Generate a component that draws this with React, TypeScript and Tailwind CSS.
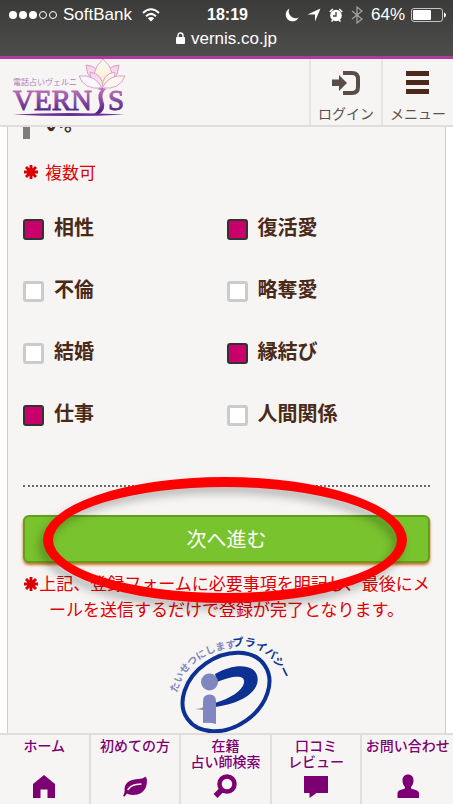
import type { ReactNode } from 'react';

type Option = { id: string; label: string; checked: boolean };

const options: Option[] = [
  { id: 'aisho', label: '相性', checked: true },
  { id: 'fukkatsu', label: '復活愛', checked: true },
  { id: 'furin', label: '不倫', checked: false },
  { id: 'ryakudatsu', label: '略奪愛', checked: false },
  { id: 'kekkon', label: '結婚', checked: false },
  { id: 'enmusubi', label: '縁結び', checked: true },
  { id: 'shigoto', label: '仕事', checked: true },
  { id: 'ningen', label: '人間関係', checked: false },
];

const navItems: { lines: string[]; icon: ReactNode }[] = [
  {
    lines: ['ホーム'],
    icon: <path d="M12 1 L23 10 V24 H15.500 V15.500 H8.500 V24 H1 V10 Z" />,
  },
  {
    lines: ['初めての方'],
    icon: (
      <>
        <path d="M0 22 C1 20 2 18 1.500 15 C2 7 9 5.500 15 5 C19 5 21 4 22.500 2.500 C24.500 5 24 8 23.500 11 C22 18 16 21 10 21 C7 21 5 20 4 19.500 L1.500 22.500 Z" />
        <path d="M5 15.500 C8 11 12 10.500 18 10" fill="none" stroke="#f6f5f4" strokeWidth="1.500" strokeLinecap="round" />
      </>
    ),
  },
  {
    lines: ['在籍', '占い師検索'],
    icon: (
      <g fill="none" stroke="currentColor">
        <circle cx="14" cy="10" r="7.500" strokeWidth="4.500" />
        <path d="M9 15.500 L2.500 22" strokeWidth="5.500" />
      </g>
    ),
  },
  {
    lines: ['口コミ', 'レビュー'],
    icon: <path d="M0 2 H24 V19 H12.500 L5.500 24 V19 H0 Z" />,
  },
  {
    lines: ['お問い合わせ'],
    icon: (
      <path d="M12 0.500 C15.500 0.500 17.500 3 17.500 6.500 C17.500 9.500 16.500 11.500 15 13 V14.500 L21 16.500 Q23 17.500 23 19 V24 H1.500 V19 Q1.500 17.500 3 16.500 L9 14.500 V13 C7.500 11.500 6.500 9.500 6.500 6.500 C6.500 3 8.500 0.500 12 0.500 Z" />
    ),
  },
];

function StatusBar() {
  return (
    <div className="border-b-[3px] border-[#b03a9e] bg-linear-to-b from-[#3b3b3a] to-[#4d4d4b] font-['Liberation_Sans',sans-serif] text-white">
      <div className="grid h-7 grid-cols-[1fr_auto_1fr] items-center pl-[9px] pr-[7px] pt-0.5 text-[17px]">
        <div className="flex items-center">
          <svg className="mr-1.5 h-2.5 w-12" viewBox="0 0 48 10" fill="currentColor">
            <circle cx="4" cy="5" r="4" />
            <circle cx="14" cy="5" r="4" />
            <circle cx="24" cy="5" r="4" />
            <circle cx="34" cy="5" r="3.500" fill="none" stroke="currentColor" />
            <circle cx="44" cy="5" r="3.500" fill="none" stroke="currentColor" />
          </svg>
          <span>SoftBank</span>
          <svg className="ml-2.5 h-3.5 w-[18px]" viewBox="0 0 18 14" fill="none" stroke="currentColor" strokeWidth="2">
            <path d="M1 5 Q9 -2.500 17 5" />
            <path d="M4 8.200 Q9 3.500 14 8.200" />
            <path d="M9 13.500 L5.800 10.300 Q9 7.800 12.200 10.300 Z" fill="currentColor" stroke="none" />
          </svg>
        </div>
        <span className="text-base font-bold">18:19</span>
        <div className="flex items-center justify-end">
          <svg className="mr-2 h-3.5 w-3.5" viewBox="0 0 14 14" fill="currentColor">
            <path d="M4.500 0.500 A6.800 6.800 0 1 0 13.700 9.500 A6.800 6.800 0 0 1 4.500 0.500 Z" />
          </svg>
          <svg className="mr-2 h-3.5 w-3.5" viewBox="0 0 14 14" fill="currentColor">
            <path d="M13.500 0.500 L8 13.500 V6.500 H0.500 Z" />
          </svg>
          <svg className="mr-2 h-3.5 w-3.5" viewBox="0 0 14 14">
            <circle cx="7" cy="7.500" r="5.800" fill="currentColor" />
            <path d="M0.800 4 L3.800 1 M13.200 4 L10.200 1 M2.500 13.500 L4 12 M11.500 13.500 L10 12" stroke="currentColor" strokeWidth="1.600" />
            <path d="M7 4 V8 H4" fill="none" stroke="#414140" strokeWidth="1.300" />
          </svg>
          <svg className="mr-2 h-[18px] w-3 text-[#a0a09f]" viewBox="0 0 12 18" fill="none" stroke="currentColor" strokeWidth="1.300">
            <path d="M1 5 L11 13 L6 17 V1 L11 5 L1 13" />
          </svg>
          <span>64%</span>
          <svg className="ml-1.5 h-3.5 w-[35px]" viewBox="0 0 35 14">
            <rect x="0.500" y="0.500" width="31" height="13" rx="2.500" fill="none" stroke="#c4c4c4" />
            <rect x="2" y="2" width="18" height="10" rx="1" fill="currentColor" />
            <path d="M33 4.500 Q35 5 35 7 Q35 9 33 9.500 Z" fill="currentColor" />
          </svg>
        </div>
      </div>
      <div className="flex h-7 items-start justify-center gap-1.5 text-[17px] leading-[22px]">
        <svg className="mt-1 h-3 w-[9px]" viewBox="0 0 9 12" fill="currentColor">
          <rect y="5" width="9" height="7" rx="1" />
          <path d="M2 6 V3.500 Q2 1 4.500 1 Q7 1 7 3.500 V6" fill="none" stroke="currentColor" strokeWidth="1.400" />
        </svg>
        <span>vernis.co.jp</span>
      </div>
    </div>
  );
}

function Logo() {
  return (
    <svg className="h-[60px] w-[116px]" viewBox="0 0 116 60" role="img" aria-label="電話占いヴェルニ VERNIS">
      <defs>
        <linearGradient id="letters" x1="0" y1="30" x2="0" y2="52" gradientUnits="userSpaceOnUse">
          <stop offset="0" stopColor="#bd74b8" />
          <stop offset="1" stopColor="#56258c" />
        </linearGradient>
        <linearGradient id="petalPink" x1="0" y1="0" x2="0" y2="1">
          <stop offset="0" stopColor="#f5cfe6" />
          <stop offset="1" stopColor="#fdf3ec" />
        </linearGradient>
        <linearGradient id="petalCream" x1="0" y1="0" x2="0" y2="1">
          <stop offset="0" stopColor="#fdfbf5" />
          <stop offset="1" stopColor="#fbe9c8" />
        </linearGradient>
      </defs>
      <g stroke="#d49aca" strokeWidth="0.900">
        <path d="M74 6 Q88 6 93 27 Q75 24 74 6 Z" fill="url(#petalPink)" />
        <path d="M107 6 Q94 6 88 27 Q106 24 107 6 Z" fill="url(#petalPink)" />
        <path d="M91 0 Q107 14 95 28 H86 Q76 14 91 0 Z" fill="url(#petalCream)" />
        <path d="M78 13 Q91 15 91 29 Q78 28 78 13 Z" fill="url(#petalPink)" />
        <path d="M103 13 Q90 15 90 29 Q103 28 103 13 Z" fill="url(#petalCream)" />
        <path d="M67 17 Q83 15 90 29 Q72 31 67 17 Z" fill="#fdf6fa" />
        <path d="M113 17 Q97 15 90 29 Q108 31 113 17 Z" fill="#fdf6ee" />
      </g>
      <text x="1" y="26" fontSize="8" fill="#ad7db5" className="font-['Noto_Sans_CJK_JP',sans-serif]">
        電話占いヴェルニ
      </text>
      <g fill="url(#letters)" stroke="url(#letters)" strokeWidth="0.900" fontSize="29" className="font-['Liberation_Serif',serif]">
        <text x="1" y="51">VERN</text>
        <text x="96" y="51">S</text>
      </g>
      <path d="M85 30 Q90 28 94 30 Q89 34 91 41 Q95 51 86 56 L82 55 Q90 50 87 42 Q85 35 89 31 Z" fill="url(#letters)" />
      <path d="M1 55.500 Q58 52.500 113 55.500 Q58 58.500 1 55.500 Z" fill="#6a2f95" />
    </svg>
  );
}

function Asterisk() {
  return (
    <svg className="inline-block h-4 w-4 align-[-2px]" viewBox="0 0 16 16" stroke="#d80000" strokeWidth="2.900">
      <path d="M8 1 V15 M1 8 H15 M3 3 L13 13 M13 3 L3 13" />
    </svg>
  );
}

function PrivacyMark() {
  return (
    <svg className="mx-auto -mt-0.5 block h-[120px] w-[150px]" viewBox="0 0 150 120" role="img" aria-label="プライバシーマーク">
      <defs>
        <path id="arcLeft" d="M25 73 C30 50 50 30 84 28" />
        <path id="arcRight" d="M81 27 C104 22 124 34 136 70" />
      </defs>
      <g className="font-['Noto_Sans_CJK_JP',sans-serif] font-bold">
        <text fontSize="10" fill="#8087c0">
          <textPath href="#arcLeft">たいせつにします</textPath>
        </text>
        <text fontSize="11" fill="#0c3192">
          <textPath href="#arcRight">プライバシー</textPath>
        </text>
      </g>
      <ellipse cx="74" cy="72" rx="47" ry="35" transform="rotate(-35 74 72)" fill="none" stroke="#0c3192" strokeWidth="4" />
      <path
        d="M63 54 C75 47 87 45 95 47 C105 49 107 58 105 64 C101 76 84 84 63 87 V83 C79 78 90 71 92 63 C93 57 88 56 81 57 C75 58 70 60 65 62 Z"
        fill="#0c3192"
      />
      <circle cx="57.500" cy="62" r="8.500" fill="#8087c0" />
      <path d="M51 103 V81 Q51 74.500 57.500 74.500 Q64 74.500 64 81 V104 Q57 102 51 103 Z" fill="#8087c0" />
      <path d="M43 89 Q48 89 52 87 V90 Z" fill="#8087c0" />
    </svg>
  );
}

export default function App() {
  return (
    <div className="flex h-screen flex-col bg-white font-['Noto_Sans_CJK_JP',sans-serif] text-[#4a2a17]">
      <StatusBar />

      {/* Site header */}
      <header className="flex h-[68px] shrink-0 border-b-2 border-[#dfdedc] bg-[#f6f5f4]">
        <a href="#top" className="flex-1 pl-3">
          <Logo />
        </a>
        <a href="#login" className="flex w-[72px] flex-col items-center border-l-2 border-[#e6e5e4] pt-2.5 text-sm leading-5 text-[#5c514c]">
          <svg className="mb-1.5 h-7 w-7" viewBox="0 0 28 28">
            <path d="M0 10.500 H7 V6 L15 14 L7 22 V17 H0 Z" fill="#5a4d48" />
            <path d="M11 4 H20 Q26 4 26 10 V18 Q26 24 20 24 H11" fill="none" stroke="#5a4d48" strokeWidth="4" />
          </svg>
          ログイン
        </a>
        <button className="flex w-[72px] flex-col items-center border-l-2 border-[#e6e5e4] pt-2.5 text-sm leading-5 text-[#5c514c]">
          <svg className="mb-1.5 h-7 w-7" viewBox="0 0 28 28" fill="#4b2a1b">
            <rect x="2" y="2" width="23" height="5" />
            <rect x="2" y="11" width="23" height="5" />
            <rect x="2" y="20" width="23" height="5" />
          </svg>
          メニュー
        </button>
      </header>

      {/* Form */}
      <main className="mx-[7px] min-h-0 flex-1 overflow-hidden border-x border-[#cfcecc] bg-[#f6f5f4] px-[15px]">
        <div className="flex h-3 items-end overflow-hidden">
          <span className="h-3 w-[7px] bg-[#7d7d7d]" />
          <h2 className="pb-1.5 pl-3.5 text-xl leading-5 font-bold">い。</h2>
        </div>
        <p className="flex items-center gap-1.5 pt-5 text-[17px] leading-[26px] text-[#e00000]">
          <Asterisk />
          複数可
        </p>

        <div className="mt-[13px] grid grid-cols-2">
          {options.map((option) => (
            <label key={option.id} htmlFor={option.id} className="flex h-[62px] items-center gap-2.5 text-xl font-bold">
              <input
                id={option.id}
                type="checkbox"
                defaultChecked={option.checked}
                className="size-[21px] appearance-none rounded-[3px] border-[3px] border-[#cbcbcb] bg-white checked:border-2 checked:border-[#343232] checked:bg-[#c9006b]"
              />
              <span className="pb-1 leading-6">{option.label}</span>
            </label>
          ))}
        </div>

        <hr className="mt-[39px] border-t-2 border-dotted border-[#6b6764]" />

        <div className="relative mt-7">
          <button className="h-12 w-full rounded-md border-2 border-[#5f9f1c] bg-[#79c32e] text-xl text-white shadow-[0_2px_3px_#d2691e]">
            次へ進む
          </button>
          {/* Highlight ring over the button */}
          <div className="pointer-events-none absolute -top-[38px] -bottom-10 left-5 right-[23px] rounded-[50%] border-10 border-[#ff0000] drop-shadow-[-4px_6px_4px_rgba(0,0,0,0.25)]" />
        </div>

        <p className="mt-[7px] text-center text-[17px] leading-[26px] whitespace-nowrap text-[#e00000]">
          <Asterisk />
          上記、登録フォームに必要事項を明記し、最後にメ
          <br />
          ールを送信するだけで登録が完了となります。
        </p>

        <PrivacyMark />
      </main>

      {/* Bottom navigation */}
      <nav className="grid h-[71px] shrink-0 grid-cols-5 border-t-2 border-[#dfdedc] bg-[#f6f5f4] text-[#7d0073]">
        {navItems.map((item) => (
          <a
            key={item.lines[0]}
            href="#nav"
            className="flex flex-col items-center justify-between border-r-2 border-[#e0dfde] pt-0.5 pb-1.5 text-sm leading-4 font-medium whitespace-nowrap last:border-r-0"
          >
            <span className="text-center">
              {item.lines.map((line) => (
                <span key={line} className="block">
                  {line}
                </span>
              ))}
            </span>
            <svg className="h-6 w-6" viewBox="0 0 24 24" fill="currentColor">
              {item.icon}
            </svg>
          </a>
        ))}
      </nav>
    </div>
  );
}
